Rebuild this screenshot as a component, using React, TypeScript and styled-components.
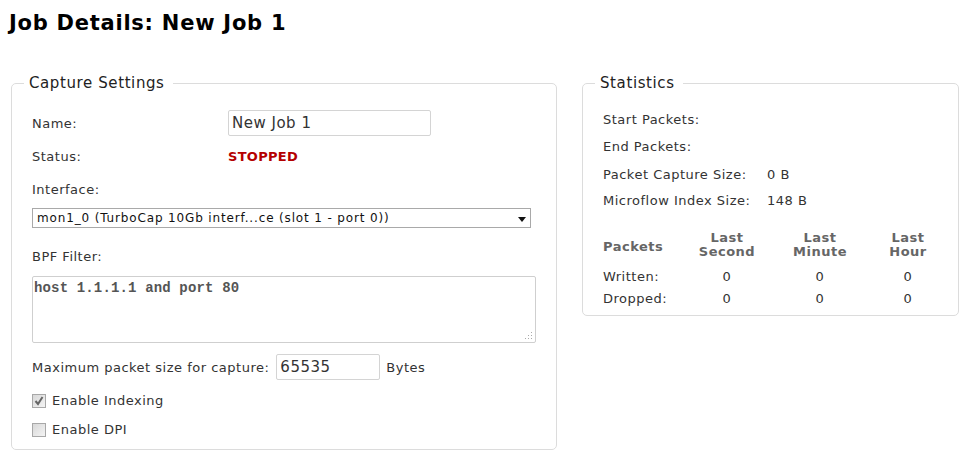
import React from "react";
import styled, { createGlobalStyle } from "styled-components";

const Global = createGlobalStyle`
  body {
    margin: 0;
    background: #fff;
    font-family: "DejaVu Sans", Verdana, sans-serif;
    color: #333;
  }
`;

const Page = styled.div`
  padding: 11px 9px 0 9px;
`;

const Title = styled.h1`
  margin: 0 0 39px 0;
  font-size: 21px;
  font-weight: bold;
  color: #000;
  line-height: 25px;
  letter-spacing: 0.75px;
`;

const Columns = styled.div`
  display: flex;
  align-items: flex-start;
  gap: 25px;
  padding-left: 2px;
`;

const Panel = styled.fieldset<{ $w: number; $h: number }>`
  box-sizing: border-box;
  width: ${(p) => p.$w}px;
  height: ${(p) => p.$h}px;
  margin: 0;
  padding: 0 20px;
  border: 1px solid #dcdcdc;
  border-radius: 5px;
  min-width: 0;
`;

const Legend = styled.legend`
  font-size: 15px;
  letter-spacing: 0.6px;
  color: #222;
  padding: 0 8px 0 5px;
  margin-left: -8px;
  line-height: 17px;
`;

const Row = styled.div<{ $mt: number }>`
  display: flex;
  align-items: center;
  margin-top: ${(p) => p.$mt}px;
  font-size: 13px;
  letter-spacing: 0.5px;
  line-height: 15px;
`;

const Label = styled.span<{ $w?: number }>`
  display: inline-block;
  width: ${(p) => (p.$w ? `${p.$w}px` : "auto")};
  flex: none;
`;

const TextInput = styled.div<{ $w: number; $ml?: number }>`
  box-sizing: border-box;
  width: ${(p) => p.$w}px;
  height: 26px;
  margin-left: ${(p) => p.$ml ?? 0}px;
  border: 1px solid #d4d4d4;
  border-radius: 2px;
  padding: 0 3px;
  font-size: 15px;
  letter-spacing: 0.5px;
  line-height: 24px;
  color: #333;
`;

const Status = styled.span`
  color: #b40000;
  font-weight: bold;
  font-size: 13px;
  letter-spacing: 0.3px;
`;

const Select = styled.div`
  box-sizing: border-box;
  width: 499px;
  height: 20px;
  border: 1px solid #a9a9a9;
  display: flex;
  align-items: center;
  justify-content: space-between;
  padding: 0 4px 0 4px;
  font-size: 12px;
  letter-spacing: 0.85px;
  color: #111;
`;

const Arrow = styled.span`
  width: 0;
  height: 0;
  border-left: 4px solid transparent;
  border-right: 4px solid transparent;
  border-top: 5px solid #111;
  margin-top: 3px;
`;

const TextArea = styled.div`
  box-sizing: border-box;
  position: relative;
  width: 506px;
  height: 67px;
  border: 1px solid #cfcfcf;
  border-radius: 2px;
  padding: 2px 1px;
  font-family: "Liberation Mono", "Courier New", monospace;
  font-weight: bold;
  font-size: 14px;
  letter-spacing: 0.15px;
  line-height: 18px;
  color: #555;
`;

const Grip = styled.svg`
  position: absolute;
  right: 2px;
  bottom: 2px;
`;

const Check = styled.span`
  box-sizing: border-box;
  width: 14px;
  height: 14px;
  border: 1px solid #a8a8a8;
  background: linear-gradient(135deg, #d8d8d8, #f4f4f4);
  display: inline-flex;
  align-items: center;
  justify-content: center;
  margin-right: 6px;
  flex: none;
`;

const Unit = styled.span`
  margin-left: 6px;
`;

const StatRow = styled.div<{ $mt: number }>`
  display: flex;
  font-size: 13px;
  letter-spacing: 0.5px;
  line-height: 15px;
  margin-top: ${(p) => p.$mt}px;
`;

const Table = styled.div`
  display: grid;
  grid-template-columns: 87px 74px 112px 64px;
  font-size: 13px;
  letter-spacing: 0.5px;
  margin-top: 23px;
`;

const Th = styled.div<{ $left?: boolean }>`
  color: #666;
  font-weight: bold;
  line-height: 14px;
  text-align: ${(p) => (p.$left ? "left" : "center")};
  align-self: end;
  padding-bottom: ${(p) => (p.$left ? "5px" : "0")};
`;

const Td = styled.div<{ $left?: boolean; $pt: number }>`
  line-height: 15px;
  padding-top: ${(p) => p.$pt}px;
  text-align: ${(p) => (p.$left ? "left" : "center")};
  color: #333;
`;

export default function App() {
  return (
    <>
      <Global />
      <Page>
        <Title>Job Details: New Job 1</Title>
        <Columns>
          <Panel $w={546} $h={375}>
            <Legend>Capture Settings</Legend>
            <Row $mt={18}>
              <Label $w={196}>Name:</Label>
              <TextInput $w={203}>New Job 1</TextInput>
            </Row>
            <Row $mt={13}>
              <Label $w={196}>Status:</Label>
              <Status>STOPPED</Status>
            </Row>
            <Row $mt={18}>
              <Label>Interface:</Label>
            </Row>
            <Row $mt={11}>
              <Select>
                <span>mon1_0 (TurboCap 10Gb interf...ce (slot 1 - port 0))</span>
                <Arrow />
              </Select>
            </Row>
            <Row $mt={21}>
              <Label>BPF Filter:</Label>
            </Row>
            <Row $mt={12}>
              <TextArea>
                host 1.1.1.1 and port 80
                <Grip width="8" height="8" viewBox="0 0 8 8">
                  <rect x="6" y="0" width="1" height="1" fill="#aaa" />
                  <rect x="3" y="3" width="1" height="1" fill="#aaa" />
                  <rect x="6" y="3" width="1" height="1" fill="#aaa" />
                  <rect x="0" y="6" width="1" height="1" fill="#aaa" />
                  <rect x="3" y="6" width="1" height="1" fill="#aaa" />
                  <rect x="6" y="6" width="1" height="1" fill="#aaa" />
                </Grip>
              </TextArea>
            </Row>
            <Row $mt={11}>
              <Label>Maximum packet size for capture:</Label>
              <TextInput $w={104} $ml={7}>65535</TextInput>
              <Unit>Bytes</Unit>
            </Row>
            <Row $mt={13}>
              <Check>
                <svg width="10" height="10" viewBox="0 0 10 10">
                  <path d="M1.5 5 L4 8 L8.5 1" stroke="#666" strokeWidth="2" fill="none" />
                </svg>
              </Check>
              <Label>Enable Indexing</Label>
            </Row>
            <Row $mt={14}>
              <Check />
              <Label>Enable DPI</Label>
            </Row>
          </Panel>
          <Panel $w={377} $h={241}>
            <Legend>Statistics</Legend>
            <StatRow $mt={20}>
              <Label $w={164}>Start Packets:</Label>
            </StatRow>
            <StatRow $mt={12}>
              <Label $w={164}>End Packets:</Label>
            </StatRow>
            <StatRow $mt={13}>
              <Label $w={164}>Packet Capture Size:</Label>
              <span>0 B</span>
            </StatRow>
            <StatRow $mt={11}>
              <Label $w={164}>Microflow Index Size:</Label>
              <span>148 B</span>
            </StatRow>
            <Table>
              <Th $left>Packets</Th>
              <Th>Last<br />Second</Th>
              <Th>Last<br />Minute</Th>
              <Th>Last<br />Hour</Th>
              <Td $left $pt={10}>Written:</Td>
              <Td $pt={10}>0</Td>
              <Td $pt={10}>0</Td>
              <Td $pt={10}>0</Td>
              <Td $left $pt={7}>Dropped:</Td>
              <Td $pt={7}>0</Td>
              <Td $pt={7}>0</Td>
              <Td $pt={7}>0</Td>
            </Table>
          </Panel>
        </Columns>
      </Page>
    </>
  );
}
